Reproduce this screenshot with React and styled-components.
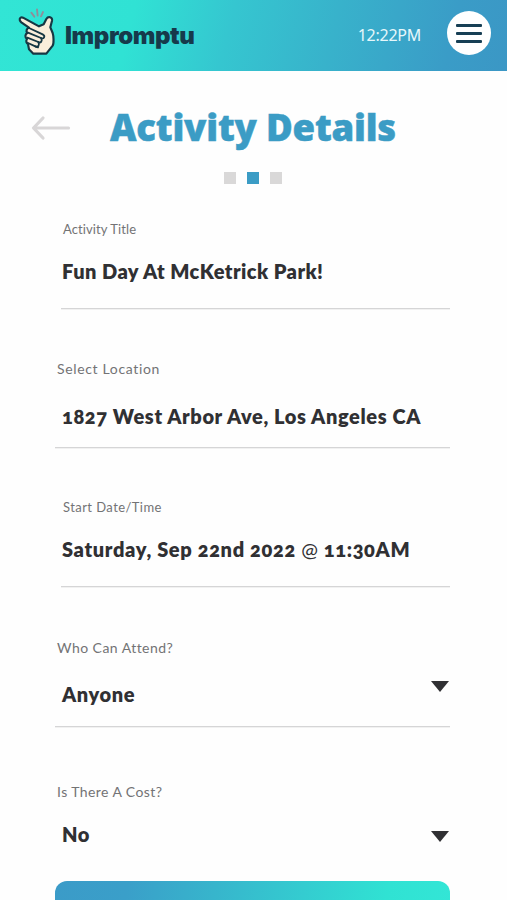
import React from 'react';
import styled, { createGlobalStyle } from 'styled-components';

const GlobalStyle = createGlobalStyle`
  * { box-sizing: border-box; }
  html, body { margin: 0; background: #fefefe; }
  body { height: 900px; overflow: hidden; }
  button { border: 0; padding: 0; background: none; cursor: pointer; }
`;

const Screen = styled.div`
  display: flex;
  flex-direction: column;
  height: 900px;
  overflow: hidden;
  font-family: Lato, 'Open Sans', sans-serif;
`;

const Header = styled.header`
  display: flex;
  flex: none;
  height: 71px;
  padding: 0 16px 0 10px;
  background: linear-gradient(104deg, #32e5d5 0%, #30e2d4 26%, #35c6d0 45%, #38b2cb 65%, #3a9cc7 88%, #3b97c5 100%);
`;

const Brand = styled.div`
  display: flex;
  flex: 1;
`;

const BrandName = styled.span`
  margin: 20px 0 0 -5px;
  font: 900 24px/32px Inter, sans-serif;
  letter-spacing: -0.4px;
  color: #163a4b;
`;

const Clock = styled.time`
  margin: 24px 26px 0 0;
  font: 400 16px/22px 'Noto Sans', sans-serif;
  letter-spacing: -0.25px;
  color: #e6f7fb;
`;

const MenuButton = styled.button`
  display: flex;
  flex-direction: column;
  align-items: center;
  justify-content: center;
  gap: 5px;
  width: 44px;
  height: 44px;
  margin-top: 11px;
  border-radius: 50%;
  background: #fff;
`;

const MenuBar = styled.span`
  width: 26px;
  height: 3px;
  border-radius: 1px;
  background: #173f55;
`;

const TitleRow = styled.div`
  display: flex;
  flex: none;
  height: 101px;
  padding: 31px 0 0 30px;
`;

const BackButton = styled.button`
  width: 42px;
  height: 28px;
  margin-top: 12px;
`;

const Title = styled.h1`
  margin: 0 0 0 38px;
  font: 900 36.5px/50px 'Noto Sans', sans-serif;
  letter-spacing: -0.18px;
  white-space: nowrap;
  color: #3b9cc5;
  -webkit-text-stroke: 0.5px #3b9cc5;
`;

const Steps = styled.div`
  display: flex;
  flex: none;
  gap: 11px;
  height: 12px;
  padding-left: 224px;
`;

const Step = styled.span`
  width: 12px;
  height: 12px;
  background: ${(p) => (p.$active ? '#3b9cc5' : '#d9d8d8')};
`;

const Form = styled.form`
  display: flex;
  flex: none;
  flex-direction: column;
  margin-top: 35px;
  padding: 0 57px 0 55px;
`;

const Field = styled.div`
  height: ${(p) => p.$height}px;
  flex: none;
`;

const Label = styled.label`
  display: block;
  padding-left: ${(p) => p.$indent}px;
  font-size: ${(p) => p.$size}px;
  line-height: 20px;
  letter-spacing: ${(p) => p.$track}px;
  color: #737375;
`;

const ValueRow = styled.div`
  display: flex;
  justify-content: space-between;
  height: ${(p) => p.$height}px;
  margin: ${(p) => p.$gap}px 0 0 ${(p) => p.$inset}px;
  padding-left: ${(p) => 7 - p.$inset}px;
  border-bottom: 1px solid ${(p) => (p.$line ? '#d5d5d6' : 'transparent')};
  box-shadow: ${(p) => (p.$line ? '0 1px 0 #f1f1f1' : 'none')};
`;

const Value = styled.span`
  font-size: 20px;
  font-weight: 800;
  line-height: 28px;
  font-variant-numeric: oldstyle-nums;
  letter-spacing: ${(p) => p.$track}px;
  white-space: nowrap;
  color: #303033;
`;

const Light = styled.span`
  font-weight: 400;
`;

const Caret = styled.svg`
  width: 18px;
  height: 11px;
  margin: ${(p) => p.$top}px 1px 0 0;
  fill: #303033;
`;

const Submit = styled.button`
  flex: none;
  height: 56px;
  margin: 0 57px 0 55px;
  border-radius: 12px 12px 10px 10px;
  background: linear-gradient(98deg, #3b9bc8 0%, #3a9fc9 18%, #37b5cc 40%, #34ccd0 62%, #30e2d3 83%, #33e6d6 100%);
`;

const fields = [
  { label: 'Activity Title', value: 'Fun Day At McKetrick Park!', height: 140, indent: 8, size: 13, labelTrack: 0.1, gap: 18, row: 52, inset: 6, track: 0.46, line: true },
  { label: 'Select Location', value: '1827 West Arbor Ave, Los Angeles CA', height: 138, indent: 2, size: 14, labelTrack: 0.65, gap: 23, row: 46, inset: 0, track: 0.61, line: true },
  { label: 'Start Date/Time', value: ['Saturday, Sep 22nd 2022 ', '@', ' 11:30AM'], height: 141, indent: 8, size: 13, labelTrack: 0.43, gap: 18, row: 52, inset: 6, track: 0.65, line: true },
  { label: 'Who Can Attend?', value: 'Anyone', height: 144, indent: 2, size: 14, labelTrack: 0.46, gap: 22, row: 47, inset: 0, track: 0.6, caret: 1, line: true },
  { label: 'Is There A Cost?', value: 'No', height: 99, indent: 2, size: 14, labelTrack: 0.42, gap: 18, row: 49, inset: 0, track: 0.6, caret: 11, line: false },
];

function SnapIcon() {
  return (
    <svg width="60" height="65" viewBox="0 0 180 195" fill="none" strokeLinecap="round" strokeLinejoin="round">
      <g stroke="#8f8f99" strokeWidth="5.5">
        <path d="M64 38l9 12" />
        <path d="M81 28l2 19" />
        <path d="M99 36l-6 13" />
      </g>
      <path
        d="M32 53C27 57 29 63 34 67L57 83C50 85 47 93 52 99C45 103 44 112 51 117C47 123 49 129 54 132L57 148L70 161L109 161L128 137C132 131 131 108 128 99L121 82L126 62C128 51 115 47 109 57L101 73L87 79L39 53Q35 51 32 53Z"
        fill="#faeedb"
        stroke="#173743"
        strokeWidth="6.5"
      />
      <g stroke="#173743" strokeWidth="5.5">
        <path d="M57 84L98 103C107 108 102 118 93 114L54 98" />
        <path d="M93 114C99 123 92 130 85 126L52 113" />
        <path d="M85 126C90 136 84 143 76 139L54 129" />
        <path d="M76 139L84 142" />
      </g>
    </svg>
  );
}

function BackArrow() {
  return (
    <svg width="42" height="28" viewBox="0 0 42 28" fill="none" stroke="#d8d6d7" strokeWidth="3.2" strokeLinecap="round" strokeLinejoin="round">
      <path d="M38.5 14H4M13 4L3.5 14L13 24" />
    </svg>
  );
}

export default function App() {
  return (
    <>
      <GlobalStyle />
      <Screen>
        <Header>
          <Brand>
            <SnapIcon />
            <BrandName>Impromptu</BrandName>
          </Brand>
          <Clock>12:22PM</Clock>
          <MenuButton aria-label="Menu">
            <MenuBar />
            <MenuBar />
            <MenuBar />
          </MenuButton>
        </Header>
        <TitleRow>
          <BackButton aria-label="Back">
            <BackArrow />
          </BackButton>
          <Title>Activity Details</Title>
        </TitleRow>
        <Steps>
          <Step />
          <Step $active />
          <Step />
        </Steps>
        <Form>
          {fields.map((f) => (
            <Field key={f.label} $height={f.height}>
              <Label $indent={f.indent} $size={f.size} $track={f.labelTrack}>{f.label}</Label>
              <ValueRow $height={f.row} $gap={f.gap} $inset={f.inset} $line={f.line}>
                <Value $track={f.track}>
                  {Array.isArray(f.value) ? (
                    <>{f.value[0]}<Light>{f.value[1]}</Light>{f.value[2]}</>
                  ) : f.value}
                </Value>
                {f.caret !== undefined && (
                  <Caret $top={f.caret} viewBox="0 0 18 11">
                    <path d="M0 0H18L9 11Z" />
                  </Caret>
                )}
              </ValueRow>
            </Field>
          ))}
        </Form>
        <Submit aria-label="Continue" />
      </Screen>
    </>
  );
}
